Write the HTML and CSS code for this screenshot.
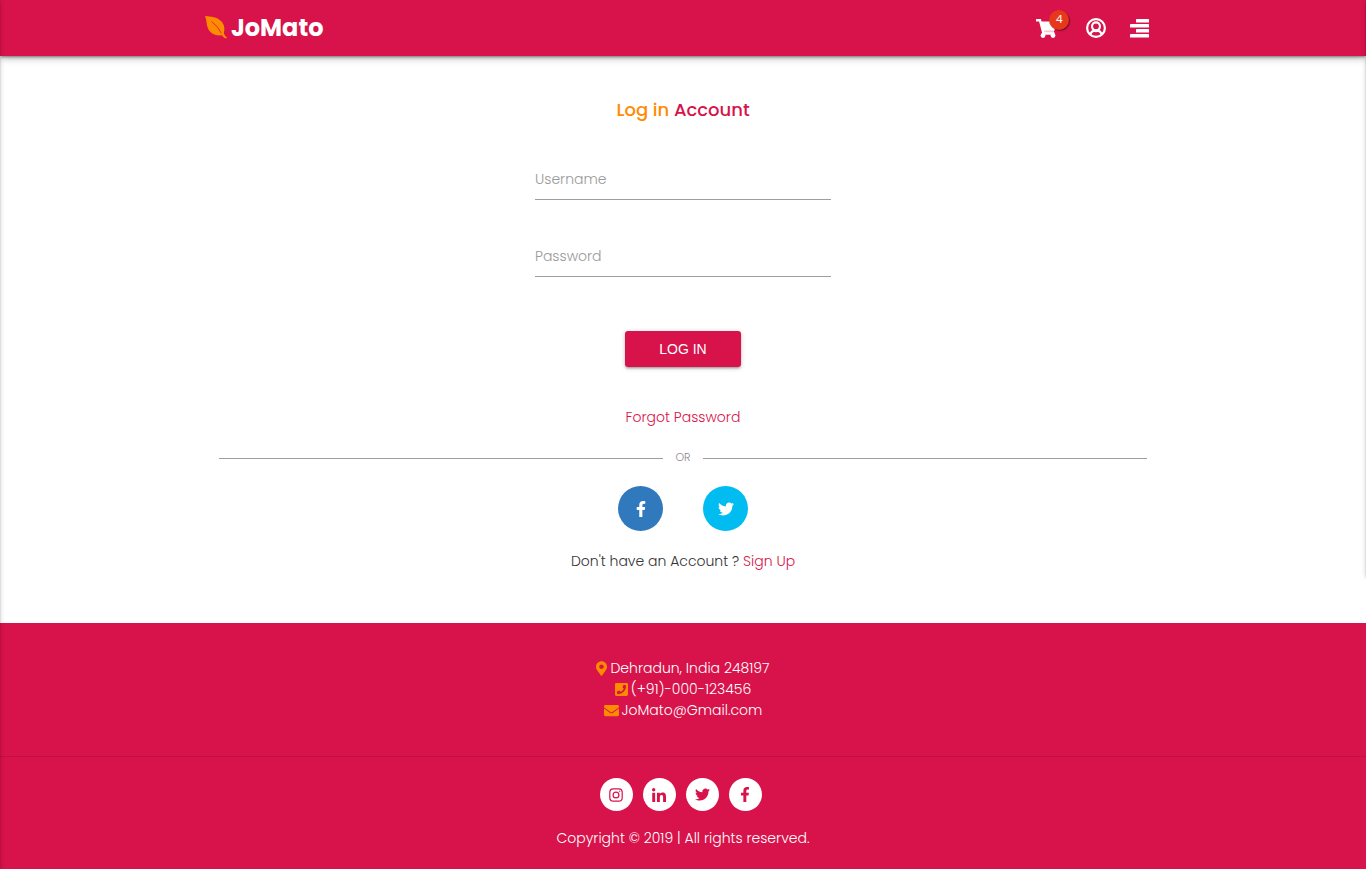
FILE: index.html
```html
<!DOCTYPE html>
<html lang="en">
<head>
<meta charset="utf-8">
<meta name="viewport" content="width=device-width, initial-scale=1">
<title>JoMato - Log in</title>
<link rel="stylesheet" href="styles.css">
</head>
<body>
<svg class="sprite" aria-hidden="true">
  <symbol id="twitter" viewBox="0 0 512 512"><path d="M459.37 151.716c.325 4.548.325 9.097.325 13.645 0 138.72-105.583 298.558-298.558 298.558-59.452 0-114.68-17.219-161.137-47.106 8.447.974 16.568 1.299 25.34 1.299 49.055 0 94.213-16.568 130.274-44.832-46.132-.975-84.792-31.188-98.112-72.772 6.498.974 12.995 1.624 19.818 1.624 9.421 0 18.843-1.3 27.614-3.573-48.081-9.747-84.143-51.98-84.143-102.985v-1.299c13.969 7.797 30.214 12.67 47.431 13.319-28.264-18.843-46.781-51.005-46.781-87.391 0-19.492 5.197-37.36 14.294-52.954 51.655 63.675 129.3 105.258 216.365 109.807-1.624-7.797-2.599-15.918-2.599-24.04 0-57.828 46.782-104.934 104.934-104.934 30.213 0 57.502 12.67 76.67 33.137 23.715-4.548 46.456-13.32 66.599-25.34-7.798 24.366-24.366 44.833-46.132 57.827 21.117-2.273 41.584-8.122 60.426-16.243-14.292 20.791-32.161 39.308-52.628 54.253z"/></symbol>
  <symbol id="facebook" viewBox="0 0 320 512"><path d="M279.14 288l14.22-92.66h-88.91v-60.13c0-25.35 12.42-50.06 52.24-50.06h40.42V6.26S260.43 0 225.36 0c-73.22 0-121.08 44.38-121.08 124.72v70.62H22.89V288h81.39v224h100.17V288z"/></symbol>
</svg>

<header class="topbar">
  <nav class="container topbar-inner">
    <a class="brand" href="#">
      <svg class="leaf" viewBox="0 0 22 23" aria-hidden="true"><path fill="#ff8b00" d="M0 0C6 .5 12 1 16 5C19.500 8.500 20 13 18.800 17.500C19.800 19.500 20.800 20.800 22 21.300L21 22.500C19 22 18 21 17 19.300C11 20 5.500 18 3 12.500C1.200 8.500 1.800 4 0 0z"/><path class="line" stroke="#d8124a" stroke-width=".8" d="M6.500 5.500Q13 10 16.300 17.200"/></svg>
      <span>JoMato</span>
    </a>
    <div class="actions">
      <a class="cart" href="#" aria-label="Cart, 4 items">
        <svg width="21" height="19" viewBox="0 0 21 19" aria-hidden="true"><path class="line" stroke="#fff" stroke-width="2.400" d="M0 1.200H4L7.500 14.500H18.500"/><path d="M4 2.500H20.500L18.500 11.500H6.500z"/><path opacity=".75" d="M7 11h11v3H7z"/><circle cx="7" cy="16.500" r="2.400"/><circle cx="17" cy="16.500" r="2.400"/></svg>
        <span class="badge">4</span>
      </a>
      <a class="user" href="#" aria-label="Account">
        <svg class="line" width="20" height="20" viewBox="0 0 20 20" stroke="#fff" stroke-width="2.200" aria-hidden="true"><circle cx="10" cy="10" r="8.900"/><circle cx="10" cy="8.300" r="4"/><path d="M4 16.200C5.500 13.500 7 12.800 8 12.600Q10 13.800 12 12.600C13 12.800 14.500 13.500 16 16.200"/></svg>
      </a>
      <button class="menu" type="button" aria-label="Menu">
        <svg width="19" height="19" viewBox="0 0 19 19" aria-hidden="true"><rect x="6" y="0" width="13" height="3.500" rx=".6"/><rect x="0" y="5" width="19" height="3.500" rx=".6"/><rect x="6" y="10" width="13" height="3.500" rx=".6"/><rect x="0" y="15" width="19" height="3.500" rx=".6"/></svg>
      </button>
    </div>
  </nav>
</header>

<main class="container login">
  <h1 class="title"><span class="accent">Log in</span> Account</h1>
  <form class="form">
    <input class="field" type="text" placeholder="Username" aria-label="Username">
    <input class="field" type="password" placeholder="Password" aria-label="Password">
    <button class="submit" type="submit">LOG IN</button>
  </form>
  <a class="forgot" href="#">Forgot Password</a>
  <div class="divider"><span>OR</span></div>
  <div class="social-login">
    <a class="round facebook" href="#" aria-label="Log in with Facebook"><svg width="10" height="16"><use href="#facebook"/></svg></a>
    <a class="round twitter" href="#" aria-label="Log in with Twitter"><svg width="16" height="16"><use href="#twitter"/></svg></a>
  </div>
  <p class="signup">Don't have an Account ? <a href="#">Sign Up</a></p>
</main>

<footer class="footer">
  <address class="contact">
    <p><svg width="11" height="15" viewBox="0 0 384 512" aria-hidden="true"><path d="M172.268 501.67C26.97 291.031 0 269.413 0 192 0 85.961 85.961 0 192 0s192 85.961 192 192c0 77.413-26.97 99.031-172.268 309.67-9.535 13.774-29.93 13.773-39.464 0zM192 272c44.183 0 80-35.817 80-80s-35.817-80-80-80-80 35.817-80 80 35.817 80 80 80z"/></svg>Dehradun, India 248197</p>
    <p><svg width="13" height="15" viewBox="0 0 448 512" aria-hidden="true"><path d="M400 32H48C21.490 32 0 53.490 0 80v352c0 26.510 21.490 48 48 48h352c26.510 0 48-21.490 48-48V80c0-26.510-21.490-48-48-48zM94 416c-7.033 0-13.057-4.873-14.616-11.627l-14.998-65a15 15 0 0 1 8.707-17.160l69.998-29.999a15 15 0 0 1 17.518 4.289l30.997 37.885c48.944-22.963 88.297-62.858 110.781-110.780l-37.886-30.997a15.001 15.001 0 0 1-4.289-17.518l30-69.998a15 15 0 0 1 17.160-8.707l65 14.998A14.997 14.997 0 0 1 384 126c0 160.292-129.945 290-290 290z"/></svg>(+91)-000-123456</p>
    <p><svg width="15" height="15" viewBox="0 0 512 512" aria-hidden="true"><path d="M502.300 190.800c3.900-3.100 9.700-.2 9.700 4.700V400c0 26.500-21.500 48-48 48H48c-26.500 0-48-21.500-48-48V195.600c0-5 5.700-7.800 9.700-4.700 22.400 17.400 52.100 39.500 154.100 113.600 21.100 15.400 56.700 47.800 92.200 47.600 35.700.3 72-32.800 92.300-47.600 102-74.100 131.600-96.300 154-113.700zM256 320c23.200.4 56.600-29.200 73.400-41.400 132.700-96.300 142.800-104.700 173.400-128.700 5.800-4.500 9.200-11.500 9.200-18.900v-19c0-26.500-21.500-48-48-48H48c-26.500 0-48 21.500-48 48v19c0 7.400 3.400 14.300 9.200 18.900 30.600 23.900 40.700 32.400 173.400 128.700 16.800 12.200 50.200 41.800 73.400 41.400z"/></svg>JoMato@Gmail.com</p>
  </address>
  <div class="bottom">
    <div class="links">
      <a class="dot" href="#" aria-label="Instagram"><svg class="line" width="14" height="14" viewBox="0 0 14 14" stroke="#d8124a" stroke-width="1.200"><rect x=".8" y=".8" width="12.400" height="12.400" rx="3.500"/><circle cx="7" cy="7" r="2.900"/><circle cx="10.700" cy="3.300" r=".4" stroke-width=".8"/></svg></a>
      <a class="dot" href="#" aria-label="LinkedIn"><svg width="14" height="14" viewBox="0 0 448 448"><path d="M100.280 448H7.400V148.900h92.880zM53.790 108.100C24.090 108.100 0 83.500 0 53.800a53.790 53.790 0 0 1 107.580 0c0 29.700-24.100 54.300-53.790 54.300zM447.900 448h-92.680V302.400c0-34.700-.7-79.200-48.290-79.200-48.290 0-55.690 37.700-55.690 76.700V448h-92.780V148.900h89.080v40.800h1.300c12.400-23.500 42.690-48.300 87.880-48.300 94 0 111.280 61.900 111.280 142.300V448z"/></svg></a>
      <a class="dot" href="#" aria-label="Twitter"><svg width="15" height="15"><use href="#twitter"/></svg></a>
      <a class="dot" href="#" aria-label="Facebook"><svg width="10" height="15"><use href="#facebook"/></svg></a>
    </div>
    <p class="copyright">Copyright © 2019 | All rights reserved.</p>
  </div>
</footer>
</body>
</html>
```

FILE: styles.css
```css
* { box-sizing: border-box; }

:root {
  --brand: #d8124a;
  --orange: #ff8b00;
}

body {
  margin: 0;
  display: flex;
  flex-direction: column;
  min-height: 100vh;
  overflow-x: hidden;
  background: #fff;
  color: #333;
  font: 300 14px/21px Poppins, Inter, sans-serif;
}

/* Edge shadows cast by the off-screen side drawers */
body::before,
body::after {
  content: "";
  position: fixed;
  top: 0;
  z-index: 5;
  width: 20px;
  box-shadow: 0 2px 2px rgba(0, 0, 0, .14), 0 3px 1px -2px rgba(0, 0, 0, .12), 0 1px 5px rgba(0, 0, 0, .2);
}
body::before { left: -20px; height: 100vh; }
body::after { right: -20px; height: 576px; }

a { color: inherit; text-decoration: none; }
p { margin: 0; }
svg { display: block; fill: currentColor; }
.line { fill: none; }
.sprite { position: absolute; width: 0; height: 0; }

.container { width: 70%; margin: 0 auto; }

.topbar {
  background: var(--brand);
  color: #fff;
  box-shadow: 0 2px 2px rgba(0, 0, 0, .14), 0 3px 1px -2px rgba(0, 0, 0, .12), 0 1px 8px rgba(0, 0, 0, .4);
}
.topbar-inner {
  display: flex;
  justify-content: space-between;
  align-items: center;
  height: 56px;
  padding-right: 12px;
}
.brand {
  display: flex;
  align-items: center;
  gap: 4px;
  padding-bottom: 2px;
  font-size: 24px;
  font-weight: 700;
}
.leaf { width: 22px; height: 23px; }
.actions { display: flex; align-items: center; gap: 24px; }
.cart { position: relative; margin-right: 5px; }
.badge {
  position: absolute;
  left: 13px;
  top: -9px;
  width: 20px;
  height: 20px;
  border-radius: 50%;
  background: #e8381b;
  box-shadow: 1px 1px 1px rgba(0, 0, 0, .45);
  font: 400 11px/18px Poppins, Inter, sans-serif;
  text-align: center;
}
.menu { padding: 0; border: 0; background: none; color: #fff; cursor: pointer; }

.login {
  display: flex;
  flex-direction: column;
  align-items: center;
  flex: 1;
  padding: 40px 14px 50px;
}
.title {
  margin: 0;
  color: var(--brand);
  font-size: 18px;
  font-weight: 500;
  line-height: 28px;
}
.accent { color: var(--orange); }
.form {
  display: flex;
  flex-direction: column;
  align-items: center;
  width: 296px;
  max-width: 100%;
  margin-top: 34px;
}
.field {
  width: 100%;
  height: 42px;
  margin-bottom: 35px;
  padding: 2px 0 0;
  border: 0;
  border-bottom: 1px solid #9e9e9e;
  border-radius: 0;
  outline: 0;
  background: none;
  font: inherit;
}
.field::placeholder { color: #999; opacity: 1; }
.submit {
  width: 116px;
  height: 36px;
  margin-top: 19px;
  padding: 0;
  border: 0;
  border-radius: 3px;
  background: var(--brand);
  color: #fff;
  box-shadow: 0 2px 2px rgba(0, 0, 0, .14), 0 3px 1px -2px rgba(0, 0, 0, .12), 0 1px 5px rgba(0, 0, 0, .2);
  font: 400 14px/20px "Liberation Sans", Arial, sans-serif;
  cursor: pointer;
}
.forgot { margin-top: 40px; color: var(--brand); }
.divider {
  display: flex;
  align-items: center;
  gap: 12px;
  width: 100%;
  margin-top: 20px;
  color: #888;
  font-size: 11px;
}
.divider::before,
.divider::after {
  content: "";
  flex: 1;
  height: 1px;
  background: #9e9e9e;
}
.divider span { padding-bottom: 2px; line-height: 19px; }
.social-login { display: flex; gap: 40px; margin-top: 17px; }
.round {
  display: grid;
  place-items: center;
  width: 45px;
  height: 45px;
  border-radius: 50%;
  color: #fff;
}
.facebook { background: #3079bd; }
.twitter { background: #00bcf0; }
.signup { margin-top: 20px; }
.signup a { color: var(--brand); }

.footer { background: var(--brand); color: #fff; text-align: center; }
.contact {
  padding: 35px 0;
  font-style: normal;
}
.contact p {
  display: flex;
  justify-content: center;
  align-items: center;
  gap: 3px;
}
.contact svg { color: var(--orange); }
.bottom { padding: 21px 0 20px; border-top: 1px solid #c21043; }
.links { display: flex; justify-content: center; gap: 10px; padding-right: 5px; }
.dot {
  display: grid;
  place-items: center;
  width: 33px;
  height: 33px;
  border-radius: 50%;
  background: #fff;
  color: var(--brand);
}
.copyright { margin-top: 17px; }
```
